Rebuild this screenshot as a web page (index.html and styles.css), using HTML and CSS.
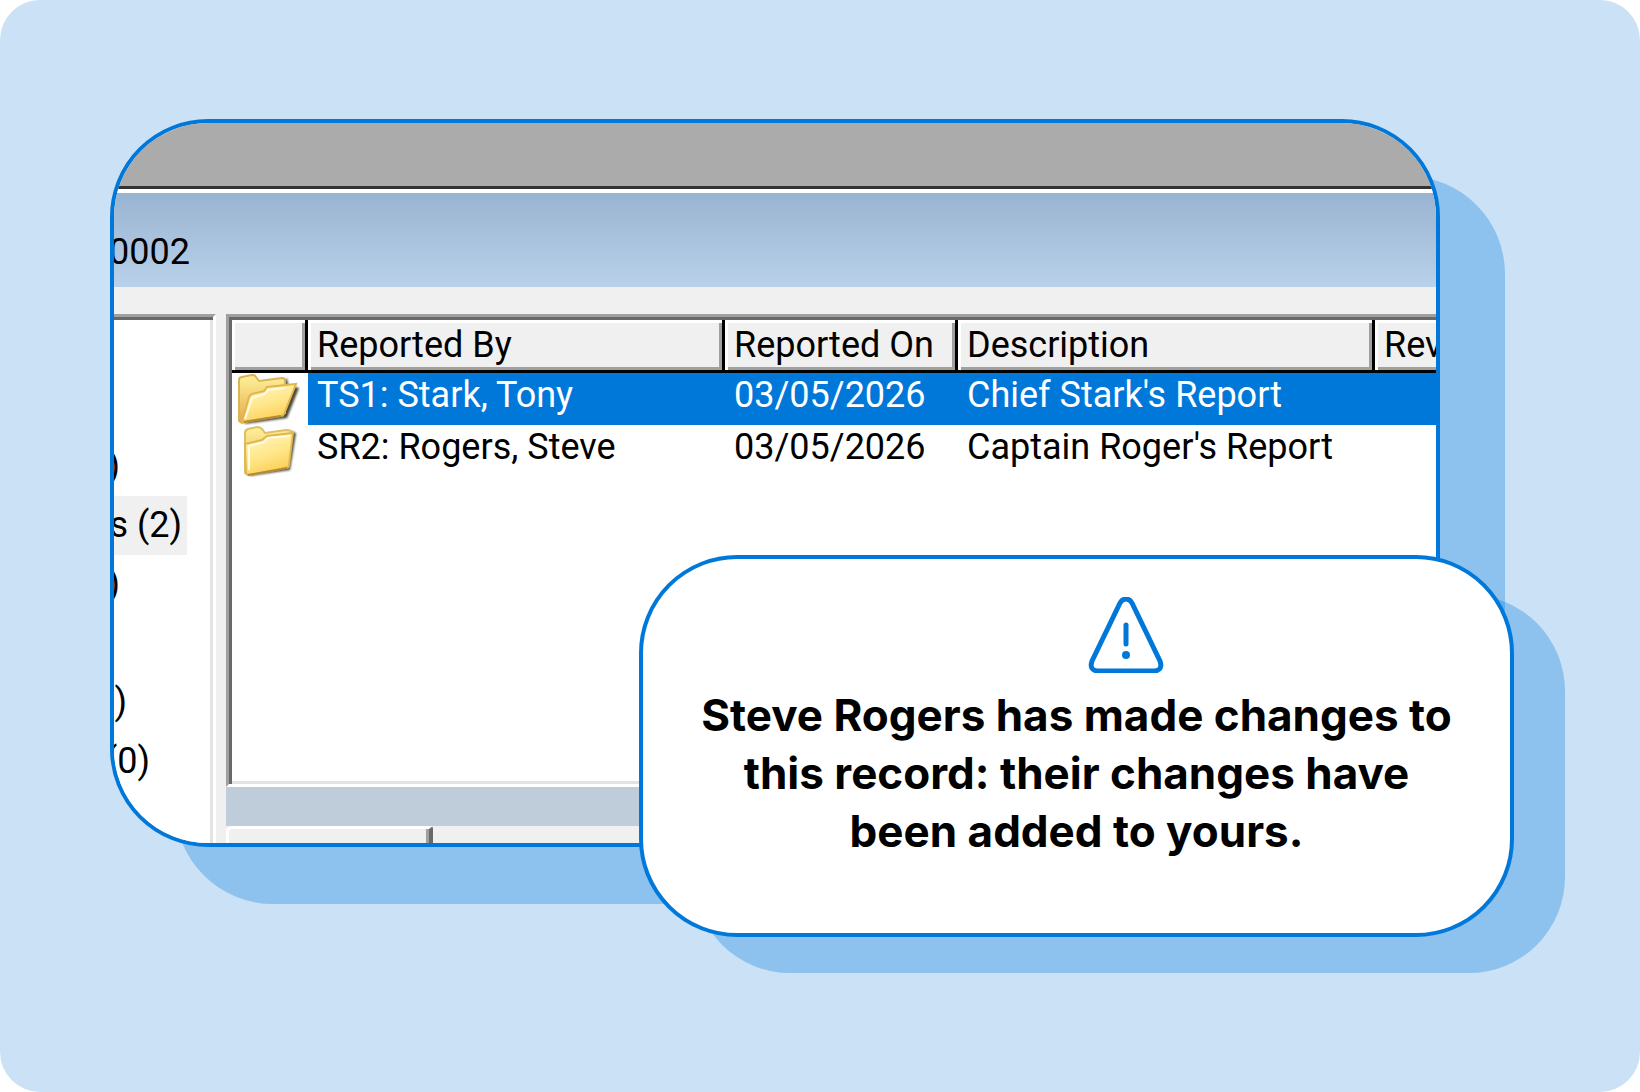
FILE: index.html
```
<!DOCTYPE html>
<html lang="en">
<head>
    <meta charset="UTF-8">
    <meta name="viewport" content="width=device-width, initial-scale=1.0">
    <title>Record updated</title>
    <link rel="stylesheet" href="styles.css">
</head>
<body>
    <main class="stage">
        <section class="window">
            <div class="window-top"></div>
            <div class="title-bar">0002</div>

            <div class="window-body">
                <!-- Record tree -->
                <ul class="tree">
                    <li class="tree-xs">)</li>
                    <li class="tree-lg selected">ts (2)</li>
                    <li class="tree-xs">)</li>
                    <li></li>
                    <li class="tree-sm">0)</li>
                    <li class="tree-md">(0)</li>
                </ul>

                <div class="content">
                    <!-- Reports list -->
                    <div class="report-list">
                        <table>
                            <colgroup>
                                <col class="col-icon">
                                <col class="col-wide">
                                <col class="col-date">
                                <col class="col-wide">
                                <col>
                            </colgroup>
                            <thead>
                                <tr>
                                    <th></th>
                                    <th>Reported By</th>
                                    <th>Reported On</th>
                                    <th>Description</th>
                                    <th>Rev</th>
                                </tr>
                            </thead>
                            <tbody>
                                <tr class="selected">
                                    <td class="icon-cell">
                                        <svg class="folder" viewBox="0 0 64 52" aria-hidden="true">
                                            <defs>
                                                <linearGradient id="back" x1="0" y1="0" x2="0" y2="1">
                                                    <stop offset="0" stop-color="#fff29a"/>
                                                    <stop offset="1" stop-color="#e3a94a"/>
                                                </linearGradient>
                                                <linearGradient id="front" x1="0" y1="0" x2="0.4" y2="1">
                                                    <stop offset="0" stop-color="#fff6c4"/>
                                                    <stop offset="0.6" stop-color="#ffe78a"/>
                                                    <stop offset="1" stop-color="#fdd05a"/>
                                                </linearGradient>
                                                <filter id="soft" x="-20%" y="-20%" width="140%" height="140%">
                                                    <feGaussianBlur stdDeviation="1.2"/>
                                                </filter>
                                            </defs>
                                            <path d="M8 51 L51 45 L63 15 L52 12 L51 5 Z" fill="#4a4638" filter="url(#soft)"/>
                                            <path d="M3 48 V7 Q3 4 6 4 L16 2 Q19 2 20 4 L23 8 L46 5 Q49 5 49 8 V40 L6 50 Z" fill="url(#back)" stroke="#d9b455" stroke-width="2"/>
                                            <path d="M6 49 L13 24 Q14 22 16 21 L28 18 L31 14 L60 11 L48 41 Q47 43 45 43 Z" fill="url(#front)" stroke="#e2b64f" stroke-width="2"/>
                                            <path d="M9 46 L16 25 L29 21 L32 17 L49 15" fill="none" stroke="#fffbe2" stroke-width="2"/>
                                            <path d="M8 49 L45 43" stroke="#b58a35" stroke-width="2"/>
                                        </svg>
                                    </td>
                                    <td>TS1: Stark, Tony</td>
                                    <td>03/05/2026</td>
                                    <td>Chief Stark's Report</td>
                                    <td></td>
                                </tr>
                                <tr>
                                    <td class="icon-cell">
                                        <svg class="folder" viewBox="0 0 64 52" aria-hidden="true">
                                            <path d="M13 51 L54 45 L60 8 L54 6 Z" fill="#4a4638" filter="url(#soft)"/>
                                            <path d="M9 48 V8 Q9 5 12 4 L21 2 Q24 2 26 4 L29 8 L50 5 Q56 5 56 9 L52 40 L12 50 Z" fill="url(#back)" stroke="#dcbf6a" stroke-width="2"/>
                                            <path d="M9 19 L26 15 L31 11 L57 8 L53 40 Q53 43 50 43 L13 50 Q10 50 10 47 Z" fill="url(#front)" stroke="#e2b64f" stroke-width="2"/>
                                            <path d="M13 45 V21 L28 17 L32 13 L54 11" fill="none" stroke="#fffbe2" stroke-width="2"/>
                                            <path d="M12 50 L51 43" stroke="#b58a35" stroke-width="2"/>
                                        </svg>
                                    </td>
                                    <td>SR2: Rogers, Steve</td>
                                    <td>03/05/2026</td>
                                    <td>Captain Roger's Report</td>
                                    <td></td>
                                </tr>
                            </tbody>
                        </table>
                    </div>
                    <div class="splitter"></div>
                    <div class="tab-strip">
                        <div class="tab"></div>
                    </div>
                </div>
            </div>
        </section>

        <!-- Message over the window -->
        <section class="alert" role="alert">
            <svg class="alert-icon" viewBox="0 0 76 76" aria-hidden="true">
                <path d="M32 6 Q34 2 38 2 Q42 2 44 6 L72 64 Q75 73 67 74 H9 Q1 73 4 64 Z" fill="none" stroke="#0078da" stroke-width="5" stroke-linejoin="round"/>
                <path d="M38 28 V47" stroke="#0078da" stroke-width="5" stroke-linecap="round"/>
                <circle cx="38" cy="58" r="4" fill="#0078da"/>
            </svg>
            <p>Steve Rogers has made changes to this record: their changes have been added to yours.</p>
        </section>
    </main>
</body>
</html>
```
FILE: styles.css
```
* {
    box-sizing: border-box;
}
body {
    margin: 0;
    background-color: #fff;
    font-family: Roboto, Arial, sans-serif;
    font-size: 36px;
    color: #000;
}
.stage {
    position: relative;
    min-height: 100vh;
    padding: 119px 200px 119px 110px;
    border-radius: 40px;
    background-color: #cbe2f6;
}
.window {
    overflow: hidden;
    border: 4px solid #0078da;
    border-radius: 98px;
    background-color: #f0f0f0;
    box-shadow: 65px 57px 0 rgba(0, 120, 218, 0.3);
}
.window-top {
    height: 66px;
    background-color: #ababab;
    border-bottom: 3px solid #333;
}
.title-bar {
    height: 98px;
    padding-top: 20px;
    border-top: 4px solid #fff;
    background: linear-gradient(#99b4d1, #b9d1ea);
    line-height: 78px;
    text-indent: -5px;
}
.window-body {
    display: flex;
    padding-top: 27px;
}

/* Tree */
.tree {
    display: flex;
    flex-direction: column;
    align-items: flex-start;
    flex: 0 0 102px;
    margin: 0 10px 0 0;
    padding: 120px 0 0;
    list-style: none;
    background-color: #fff;
    border-top: 3px solid #a0a0a0;
    border-right: 3px solid #fff;
    box-shadow: inset 0 3px #696969, inset -3px 0 #e3e3e3;
}
.tree li {
    display: flex;
    justify-content: flex-end;
    height: 59px;
    line-height: 59px;
    white-space: nowrap;
}
.tree-xs {
    width: 6px;
}
.tree-sm {
    width: 13px;
}
.tree-md {
    width: 36px;
}
.tree-lg {
    width: 73px;
    padding-right: 5px;
}
.tree .selected {
    background-color: #f0f0f0;
}

/* Reports */
.content {
    flex: 1;
    min-width: 0;
}
.report-list {
    min-height: 473px;
    padding: 3px 0 3px 3px;
    background-color: #fff;
    border-top: 3px solid #a0a0a0;
    border-left: 3px solid #a0a0a0;
    border-bottom: 3px solid #fff;
    box-shadow: inset 3px 3px #696969, inset 0 -3px #e3e3e3;
}
table {
    width: 100%;
    table-layout: fixed;
    border-spacing: 0;
}
.col-icon {
    width: 76px;
}
.col-wide {
    width: 417px;
}
.col-date {
    width: 233px;
}
th, td {
    height: 52px;
    padding: 0 0 0 9px;
    font-weight: 400;
    line-height: 44px;
    text-align: left;
    white-space: nowrap;
    overflow: hidden;
}
th {
    height: 53px;
    background-color: #f0f0f0;
    border-right: 3px solid #000;
    border-bottom: 3px solid #000;
    box-shadow: inset 3px 3px #fff, inset -3px -3px #a0a0a0;
}
td {
    padding-bottom: 8px;
}
tr.selected td {
    background-color: #0078da;
    color: #fff;
}
tr.selected .icon-cell {
    background-color: #fff;
}
th:last-child {
    border-right: 0;
    box-shadow: inset 3px 3px #fff, inset 0 -3px #a0a0a0;
}
.icon-cell {
    padding: 0 0 0 4px;
}
.folder {
    display: block;
    width: 64px;
    height: 52px;
}
.splitter {
    height: 39px;
    background-color: #bfccda;
}
.tab-strip {
    height: 17px;
}
.tab {
    width: 207px;
    height: 20px;
    border-top: 3px solid #fff;
    border-left: 3px solid #fff;
    border-right: 4px solid #696969;
    border-radius: 6px 3px 0 0;
    box-shadow: inset -3px 0 #a0a0a0;
}

/* Alert */
.alert {
    position: absolute;
    top: 555px;
    right: 126px;
    width: 875px;
    max-width: 90%;
    padding: 38px 50px 73px;
    border: 4px solid #0078da;
    border-radius: 98px;
    background-color: #fff;
    box-shadow: 53px 38px 0 -2px rgba(0, 120, 218, 0.3);
    text-align: center;
}
.alert-icon {
    display: block;
    width: 174px;
    height: 76px;
    margin: 0 auto 13px;
    padding-left: 98px;
}
.alert p {
    margin: 0;
    font-family: Inter, Arial, sans-serif;
    font-size: 44px;
    font-weight: 700;
    line-height: 58px;
}
```
